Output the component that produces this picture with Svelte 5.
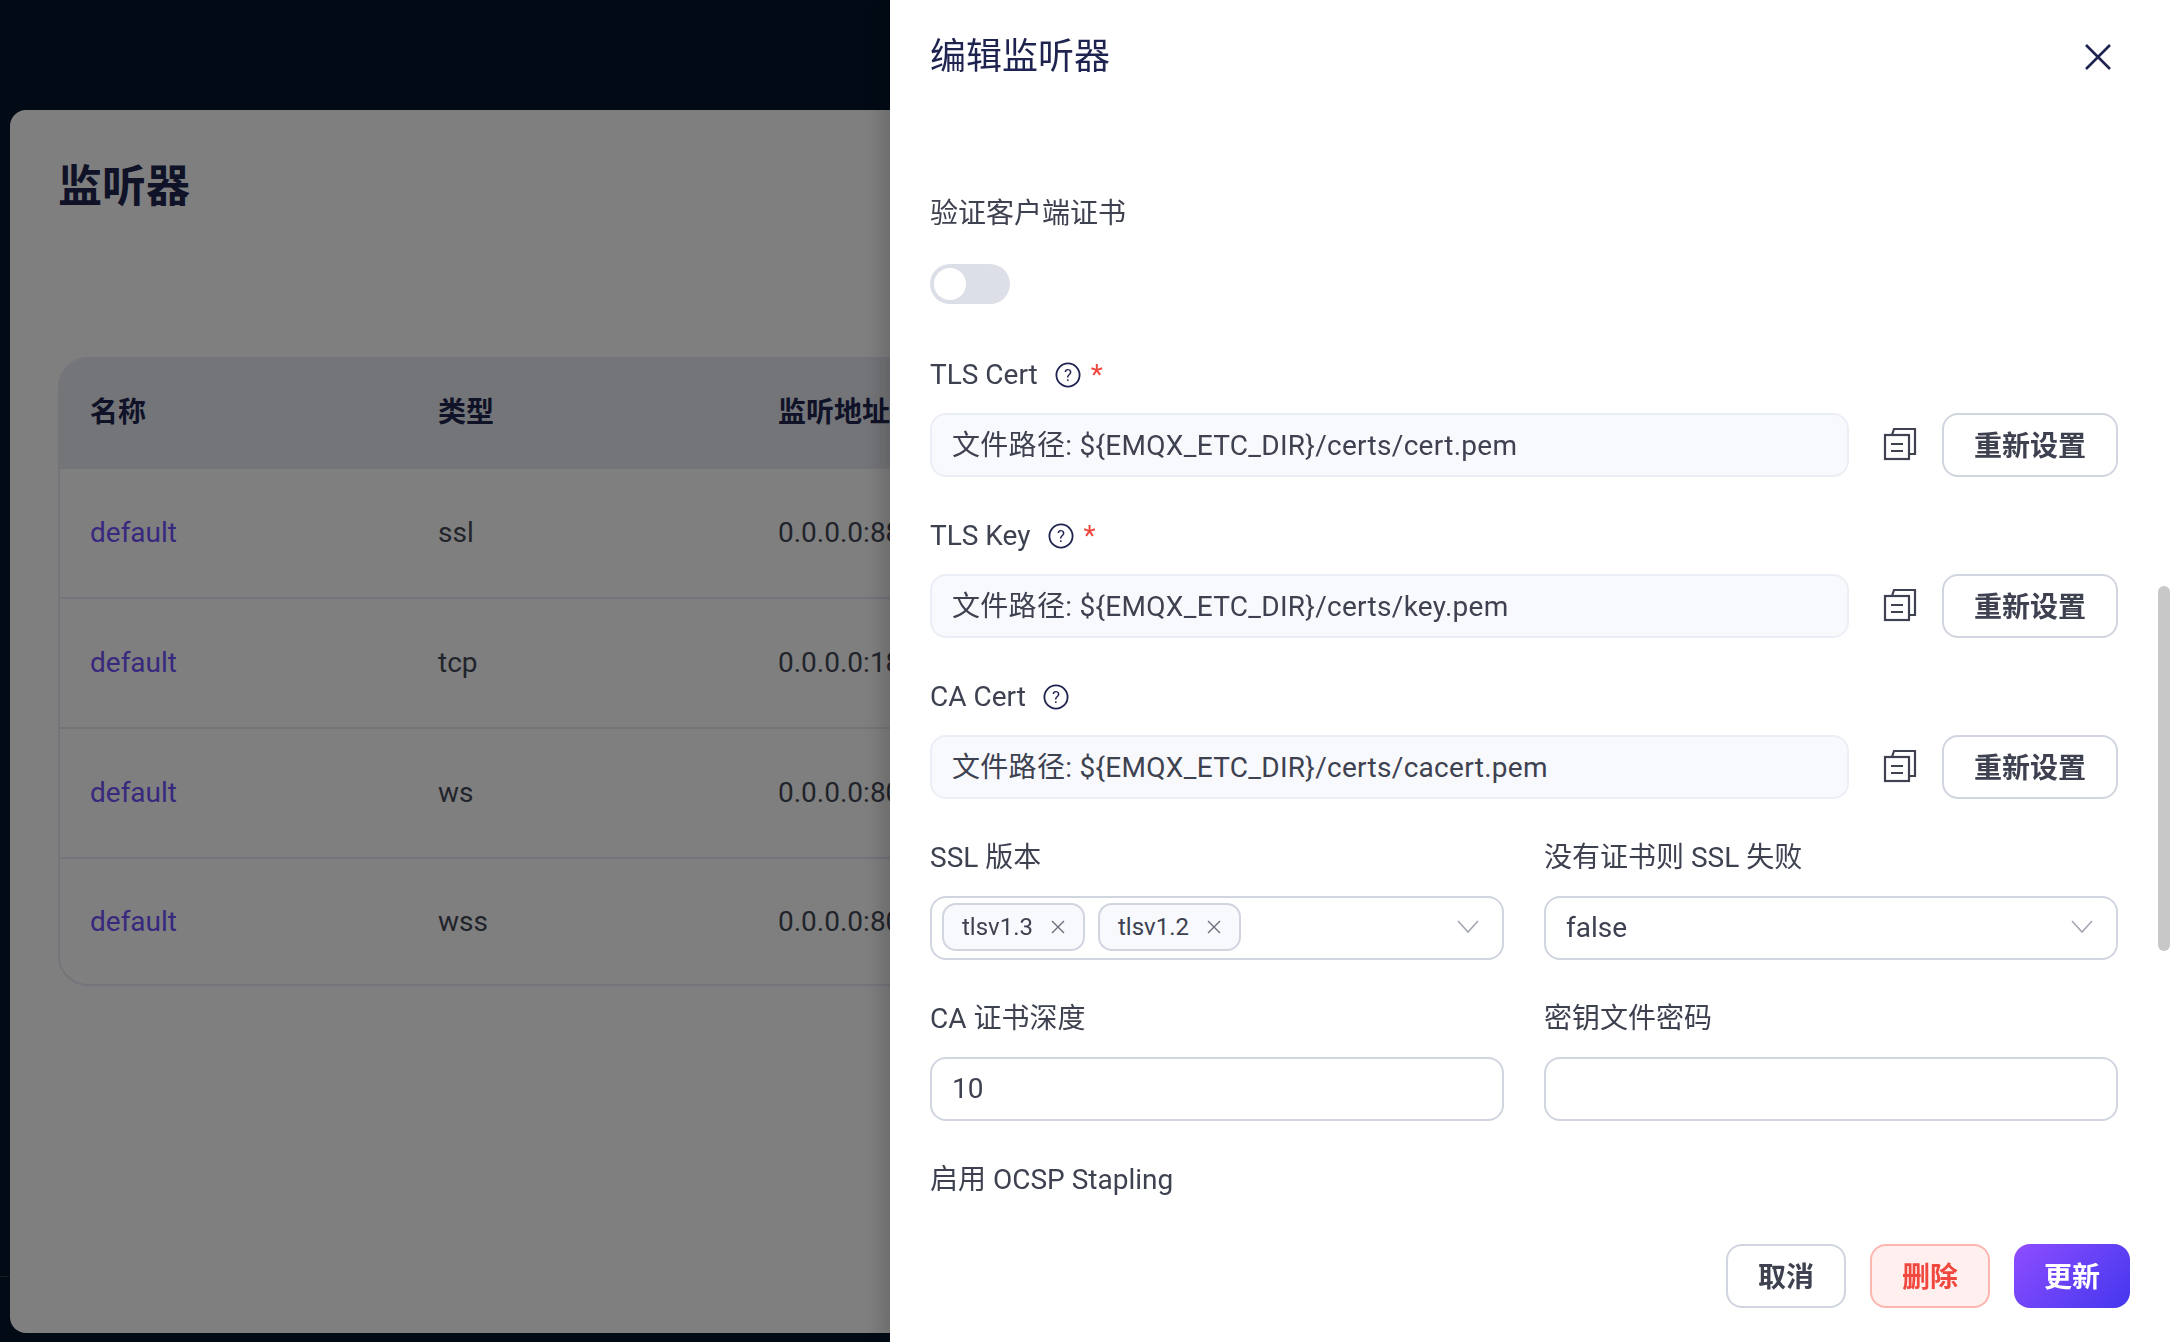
<script lang="ts">
  const listeners = [
    { name: 'default', type: 'ssl', addr: '0.0.0.0:8883' },
    { name: 'default', type: 'tcp', addr: '0.0.0.0:1883' },
    { name: 'default', type: 'ws', addr: '0.0.0.0:8083' },
    { name: 'default', type: 'wss', addr: '0.0.0.0:8084' },
  ]
  const certs = [
    { label: 'TLS Cert', required: true, value: '文件路径: ${EMQX_ETC_DIR}/certs/cert.pem' },
    { label: 'TLS Key', required: true, value: '文件路径: ${EMQX_ETC_DIR}/certs/key.pem' },
    { label: 'CA Cert', required: false, value: '文件路径: ${EMQX_ETC_DIR}/certs/cacert.pem' },
  ]
  const versions = ['tlsv1.3', 'tlsv1.2']
</script>

<div class="page">
  <div class="side-line"></div>
  <main class="card">
    <h1>监听器</h1>
    <div class="table">
      <div class="row head">
        <div>名称</div>
        <div>类型</div>
        <div>监听地址</div>
      </div>
      {#each listeners as l}
        <div class="row">
          <div class="link">{l.name}</div>
          <div>{l.type}</div>
          <div>{l.addr}</div>
        </div>
      {/each}
    </div>
  </main>
</div>

<div class="overlay"></div>

<aside class="drawer">
  <header class="drawer-head">
    <h2>编辑监听器</h2>
    <svg class="close" width="26" height="26" viewBox="0 0 26 26" fill="none" stroke="#1f2350" stroke-width="2.6">
      <path d="M1 1 25 25M25 1 1 25" />
    </svg>
  </header>

  <div class="drawer-body">
    <div class="item">
      <div class="label">验证客户端证书</div>
      <div class="control"><span class="switch"><span class="knob"></span></span></div>
    </div>

    {#each certs as c}
      <div class="item">
        <div class="label">
          {c.label}
          <svg class="help" width="26" height="26" viewBox="0 0 26 26">
            <circle cx="13" cy="13" r="11.6" fill="none" stroke="#1f2350" stroke-width="1.8" />
            <text x="13" y="19" text-anchor="middle" font-size="17" fill="#1f2350">?</text>
          </svg>
          {#if c.required}<span class="star">*</span>{/if}
        </div>
        <div class="control file">
          <div class="input disabled">{c.value}</div>
          <svg class="copy" width="34" height="34" viewBox="0 0 34 34" fill="none" stroke="#3d4150" stroke-width="2.2">
            <rect x="2" y="8" width="24" height="24" />
            <path d="M9 8 11 2H32V27H27M8 17H20M8 24H20" />
          </svg>
          <button class="btn reset">重新设置</button>
        </div>
      </div>
    {/each}

    <div class="cols">
      <div class="item">
        <div class="label">SSL 版本</div>
        <div class="input select">
          <div class="chips">
            {#each versions as v}
              <span class="chip">
                {v}
                <svg width="14" height="14" viewBox="0 0 14 14" fill="none" stroke="#6b6e7a" stroke-width="1.4">
                  <path d="M1 1 13 13M13 1 1 13" />
                </svg>
              </span>
            {/each}
          </div>
          <svg class="chevron" width="22" height="14" viewBox="0 0 22 14" fill="none" stroke="#a4a7b3" stroke-width="1.6">
            <path d="M1 1 11 12 21 1" />
          </svg>
        </div>
      </div>
      <div class="item">
        <div class="label">没有证书则 SSL 失败</div>
        <div class="input select">
          <span>false</span>
          <svg class="chevron" width="22" height="14" viewBox="0 0 22 14" fill="none" stroke="#a4a7b3" stroke-width="1.6">
            <path d="M1 1 11 12 21 1" />
          </svg>
        </div>
      </div>
      <div class="item">
        <div class="label">CA 证书深度</div>
        <div class="input">10</div>
      </div>
      <div class="item">
        <div class="label">密钥文件密码</div>
        <div class="input"></div>
      </div>
    </div>

    <div class="item">
      <div class="label">启用 OCSP Stapling</div>
    </div>
  </div>

  <footer class="drawer-foot">
    <button class="btn">取消</button>
    <button class="btn danger">删除</button>
    <button class="btn primary">更新</button>
  </footer>

  <div class="scrollbar"></div>
</aside>

<style>
  :global(body) {
    margin: 0;
    font-family: Roboto, "Noto Sans CJK SC", sans-serif;
    color: #3d4150;
  }
  .page {
    position: relative;
    width: 2170px;
    height: 1342px;
    box-sizing: border-box;
    padding: 110px 0 9px 10px;
    background: #04162a;
    overflow: hidden;
  }
  .side-line {
    position: absolute;
    left: 0;
    top: 1276px;
    width: 9px;
    height: 1px;
    background: #2c3746;
  }
  .card {
    height: 100%;
    box-sizing: border-box;
    padding: 47px 58px 0 48px;
    background: #fff;
    border-radius: 16px 0 0 16px;
  }
  h1 {
    margin: 0 0 140px;
    font-size: 44px;
    line-height: 60px;
    font-weight: 700;
    color: #202550;
  }
  .table {
    border: 2px solid #e9eaf6;
    border-radius: 30px;
    overflow: hidden;
    font-size: 28px;
    color: #454856;
  }
  .row {
    display: grid;
    grid-template-columns: 348px 340px 1fr;
    box-sizing: border-box;
    height: 130px;
    padding: 0 0 2px 30px;
    align-items: center;
    border-top: 2px solid #e9eaf6;
  }
  .row:last-child {
    height: 127px;
    padding-bottom: 0;
  }
  .row.head {
    height: 108px;
    padding-bottom: 6px;
    border-top: 0;
    background: #e8eaf0;
    font-weight: 700;
    color: #202550;
  }
  .link {
    color: #7050fc;
  }
  .overlay {
    position: fixed;
    inset: 0;
    background: rgba(0, 0, 0, 0.5);
  }
  .drawer {
    position: fixed;
    top: 0;
    right: 0;
    bottom: 0;
    width: 1280px;
    display: flex;
    flex-direction: column;
    background: #fff;
    box-shadow: -8px 0 20px rgba(0, 0, 0, 0.18);
    font-size: 28px;
  }
  .drawer-head {
    flex: none;
    height: 110px;
    display: flex;
    justify-content: space-between;
    align-items: center;
    padding: 0 59px 0 40px;
    box-sizing: border-box;
  }
  .drawer-head .close {
    margin-top: 3px;
  }
  h2 {
    margin: 3px 0 0;
    align-self: flex-start;
    line-height: 108px;
    font-size: 36px;
    font-weight: 400;
    color: #1f2350;
  }
  .drawer-body {
    flex: 1;
    min-height: 0;
    overflow: hidden;
    padding: 83px 52px 0 40px;
  }
  .item {
    margin-bottom: 38px;
  }
  .label {
    display: flex;
    align-items: center;
    box-sizing: border-box;
    height: 40px;
    padding-top: 2px;
    line-height: 38px;
    margin-bottom: 19px;
  }
  .help {
    margin-left: 17px;
  }
  .star {
    margin-left: 10px;
    color: #f0483e;
  }
  .control {
    height: 64px;
    display: flex;
    align-items: center;
  }
  .switch {
    display: block;
    width: 80px;
    height: 40px;
    box-sizing: border-box;
    padding: 4px;
    border-radius: 20px;
    background: #dcdfe8;
  }
  .knob {
    display: block;
    width: 32px;
    height: 32px;
    border-radius: 50%;
    background: #fff;
  }
  .input {
    box-sizing: border-box;
    height: 64px;
    padding: 0 20px 2px;
    display: flex;
    align-items: center;
    border: 2px solid #d1d5e0;
    border-radius: 16px;
    background: #fff;
  }
  .input.disabled {
    flex: 1;
    padding-bottom: 4px;
    background: #f8f9fd;
    border-color: #eceef5;
    letter-spacing: 0.3px;
  }
  .file .copy {
    margin: -2px 25px 0 34px;
  }
  .select {
    justify-content: space-between;
    padding-right: 23px;
  }
  .chips {
    display: flex;
    gap: 13px;
    margin-left: -10px;
  }
  .chip {
    display: flex;
    align-items: center;
    gap: 18px;
    box-sizing: border-box;
    height: 48px;
    padding: 0 18px;
    border: 2px solid #d1d5e0;
    border-radius: 14px;
    background: #f8f9fd;
    font-size: 24px;
  }
  .cols {
    display: grid;
    grid-template-columns: 1fr 1fr;
    column-gap: 40px;
  }
  .btn {
    box-sizing: border-box;
    width: 120px;
    height: 64px;
    padding: 0 0 2px;
    border: 2px solid #d1d5e0;
    border-radius: 16px;
    background: #fff;
    color: #3d4150;
    font: inherit;
    font-weight: 600;
  }
  .btn.reset {
    flex: none;
    width: 176px;
  }
  .btn.danger {
    background: #fff0ef;
    border-color: #fdb5b0;
    color: #f0483e;
  }
  .btn.primary {
    width: 116px;
    border: 0;
    background: linear-gradient(135deg, #8f4dff, #4337ee);
    color: #fff;
  }
  .drawer-foot {
    flex: none;
    display: flex;
    justify-content: flex-end;
    gap: 24px;
    padding: 30px 40px 34px 0;
  }
  .scrollbar {
    position: absolute;
    top: 586px;
    right: 0;
    width: 12px;
    height: 365px;
    border-radius: 6px;
    background: #c8c8c8;
  }
</style>
